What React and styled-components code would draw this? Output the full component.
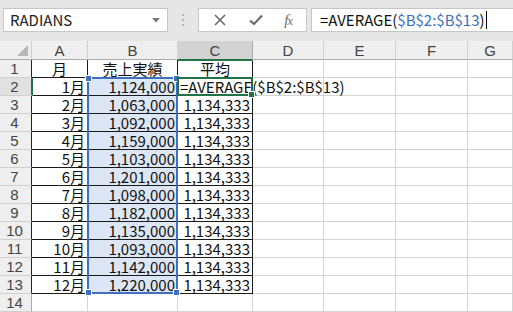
import React from "react";
import styled, { createGlobalStyle } from "styled-components";

const GlobalStyle = createGlobalStyle`
  html, body {
    margin: 0;
    padding: 0;
    background: #fff;
    overflow: hidden;
  }
  body {
    font-family: "Noto Sans CJK JP", "Noto Sans", sans-serif;
  }
`;

const Page = styled.div`
  width: 513px;
  height: 312px;
  overflow: hidden;
  background: #fff;
`;

const Toolbar = styled.div`
  display: flex;
  align-items: flex-start;
  height: 41px;
  padding: 8px 0 0 3px;
  box-sizing: border-box;
  background: #e6e6e6;
`;

const NameBox = styled.div`
  display: flex;
  align-items: center;
  justify-content: space-between;
  width: 165px;
  height: 24px;
  box-sizing: border-box;
  padding: 0 7px 0 6px;
  background: #fff;
  border: 1px solid #c6c6c6;
  font-size: 15px;
  color: #222;
  line-height: 22px;
`;

const Grip = styled.div`
  display: flex;
  flex-direction: column;
  gap: 3px;
  margin: 6px 14px 0 14px;

  span {
    width: 2px;
    height: 2px;
    background: #b3b3b3;
  }
`;

const FuncBox = styled.div`
  display: flex;
  align-items: center;
  justify-content: space-around;
  width: 109px;
  height: 24px;
  box-sizing: border-box;
  padding: 0 4px;
  background: #fff;
  border: 1px solid #c6c6c6;
  color: #6b6b6b;
`;

const Fx = styled.span`
  font-family: "Liberation Serif", serif;
  font-style: italic;
  font-size: 15px;
  color: #6b6b6b;
  letter-spacing: -1px;

  small {
    font-size: 12px;
  }
`;

const FormulaBox = styled.div`
  flex: 1;
  display: flex;
  align-items: center;
  height: 24px;
  margin-left: 4px;
  padding-left: 8px;
  box-sizing: border-box;
  background: #fff;
  border: 1px solid #c6c6c6;
  border-right: none;
  font-size: 15px;
  line-height: 22px;
  color: #111;
  white-space: nowrap;
`;

const Ref = styled.span`
  color: #3a6ec5;
`;

const Cursor = styled.span`
  display: inline-block;
  width: 1px;
  height: 18px;
  margin-left: 1px;
  background: #000;
`;

const SheetWrap = styled.div`
  position: relative;
`;

const Sheet = styled.div`
  display: grid;
  grid-template-columns: 32px 56px 90px 75px 71px 72px 72px 1fr;
  grid-template-rows: 19px repeat(14, 18px);
  font-size: 15px;
  line-height: 17px;
  color: #111;
`;

const OverlayGrid = styled(Sheet)`
  position: absolute;
  inset: 0;
  pointer-events: none;
`;

const Corner = styled.div`
  display: flex;
  align-items: flex-end;
  justify-content: flex-end;
  padding: 0 3px 3px 0;
  background: #efefef;
  border-right: 1px solid #d0d0d0;
  border-bottom: 1px solid #ababab;
`;

const ColHead = styled.div`
  display: flex;
  align-items: center;
  justify-content: center;
  font-family: "Liberation Sans", sans-serif;
  font-size: 15px;
  color: #444;
  background: ${(p) => (p.$selected ? "#d2d2d2" : "#efefef")};
  border-right: 1px solid ${(p) => (p.$selected ? "#ababab" : "#d0d0d0")};
  border-bottom: ${(p) => (p.$selected ? "2px solid #217346" : "1px solid #ababab")};
  margin-bottom: ${(p) => (p.$selected ? "-1px" : "0")};
  position: relative;
  z-index: ${(p) => (p.$selected ? 1 : 0)};
`;

const RowHead = styled.div`
  display: flex;
  align-items: flex-end;
  justify-content: center;
  padding: 0 2px 0 0;
  font-family: "Liberation Sans", sans-serif;
  font-size: 15px;
  color: #444;
  background: ${(p) => (p.$selected ? "#e1e1e1" : "#efefef")};
  border-bottom: 1px solid #d0d0d0;
  border-right: ${(p) =>
    p.$selected ? "2px solid #217346" : p.$edge ? "1px solid #222" : "1px solid #ababab"};
  margin-right: ${(p) => (p.$selected ? "-1px" : "0")};
  position: relative;
  z-index: ${(p) => (p.$selected ? 1 : 0)};
`;

const Cell = styled.div`
  display: flex;
  align-items: flex-end;
  justify-content: ${(p) =>
    p.$align === "center" ? "center" : p.$align === "right" ? "flex-end" : "flex-start"};
  padding: 0 2px;
  white-space: nowrap;
  background: ${(p) => (p.$fill ? "#dce6f4" : "#fff")};
  border-right: 1px solid ${(p) => (p.$boxed ? "#1a1a1a" : "#d4d4d4")};
  border-bottom: 1px solid ${(p) => (p.$boxed ? "#1a1a1a" : "#d4d4d4")};
`;

const RangeFrame = styled.div`
  grid-column: 3;
  grid-row: 3 / 15;
  margin: -1px 0 0 -1px;
  border: 2px solid #3f6fbf;
  position: relative;
`;

const Handle = styled.span`
  position: absolute;
  width: 5px;
  height: 5px;
  background: #3f6fbf;
  border: 1px solid #fff;
  ${(p) => (p.$v === "top" ? "top: -4px;" : "bottom: -4px;")}
  ${(p) => (p.$h === "left" ? "left: -4px;" : "right: -4px;")}
`;

const ActiveFrame = styled.div`
  grid-column: 4;
  grid-row: 3;
  margin: -1px 0 0 -1px;
  border: 2px solid #217346;
  position: relative;
`;

const FillHandle = styled.span`
  position: absolute;
  right: -4px;
  bottom: -4px;
  width: 5px;
  height: 5px;
  background: #217346;
  border: 1px solid #fff;
`;

const Editor = styled.div`
  position: absolute;
  left: 0;
  bottom: -1px;
  padding-left: 1px;
  white-space: nowrap;
  font-size: 15px;
  line-height: 17px;
  color: #111;
`;

const rows = [
  ["1月", "1,124,000"],
  ["2月", "1,063,000"],
  ["3月", "1,092,000"],
  ["4月", "1,159,000"],
  ["5月", "1,103,000"],
  ["6月", "1,201,000"],
  ["7月", "1,098,000"],
  ["8月", "1,182,000"],
  ["9月", "1,135,000"],
  ["10月", "1,093,000"],
  ["11月", "1,142,000"],
  ["12月", "1,220,000"],
];

const letters = ["A", "B", "C", "D", "E", "F", "G"];

const Check = () => (
  <svg width="16" height="14" viewBox="0 0 16 14">
    <path d="M2 7.5 L6 11 L14 2.5" fill="none" stroke="#6b6b6b" strokeWidth="2.2" />
  </svg>
);

const Cross = () => (
  <svg width="14" height="14" viewBox="0 0 14 14">
    <path d="M2 2 L12 12 M12 2 L2 12" fill="none" stroke="#6b6b6b" strokeWidth="1.6" />
  </svg>
);

const App = () => {
  const blanks = (n) => [3, 4, 5, 6].map((c) => <Cell key={`${n}-${c}`} />);

  return (
    <Page>
      <GlobalStyle />
      <Toolbar>
        <NameBox>
          <span>RADIANS</span>
          <svg width="8" height="5" viewBox="0 0 8 5">
            <path d="M0 0 H8 L4 4.5 Z" fill="#777" />
          </svg>
        </NameBox>
        <Grip>
          <span />
          <span />
          <span />
        </Grip>
        <FuncBox>
          <Cross />
          <Check />
          <Fx>
            f<small>x</small>
          </Fx>
        </FuncBox>
        <FormulaBox>
          =AVERAGE(<Ref>$B$2:$B$13</Ref>)<Cursor />
        </FormulaBox>
      </Toolbar>

      <SheetWrap>
        <Sheet>
          <Corner>
            <svg width="11" height="11" viewBox="0 0 11 11">
              <path d="M11 0 V11 H0 Z" fill="#b7b7b7" />
            </svg>
          </Corner>
          {letters.map((l) => (
            <ColHead key={l} $selected={l === "C"}>
              {l}
            </ColHead>
          ))}

          <RowHead $edge>1</RowHead>
          <Cell $align="center" $boxed>月</Cell>
          <Cell $align="center" $boxed>売上実績</Cell>
          <Cell $align="center" $boxed>平均</Cell>
          {blanks(1)}

          {rows.map(([m, v], i) => (
            <React.Fragment key={m}>
              <RowHead $edge $selected={i === 0}>
                {i + 2}
              </RowHead>
              <Cell $align="right" $boxed>{m}</Cell>
              <Cell $align="right" $boxed $fill>{v}</Cell>
              <Cell $align="right" $boxed>{i === 0 ? "" : "1,134,333"}</Cell>
              {blanks(i + 2)}
            </React.Fragment>
          ))}

          <RowHead>14</RowHead>
          <Cell />
          <Cell />
          <Cell />
          {blanks(14)}
        </Sheet>

        <OverlayGrid>
          <RangeFrame>
            <Handle $v="top" $h="left" />
            <Handle $v="top" $h="right" />
            <Handle $v="bottom" $h="left" />
            <Handle $v="bottom" $h="right" />
          </RangeFrame>
          <ActiveFrame>
            <Editor>=AVERAGE($B$2:$B$13)</Editor>
            <FillHandle />
          </ActiveFrame>
        </OverlayGrid>
      </SheetWrap>
    </Page>
  );
};

export default App;
